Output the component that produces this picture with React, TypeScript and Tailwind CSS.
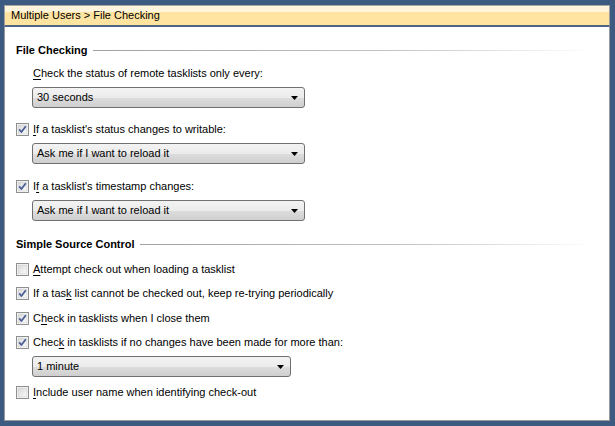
import React from "react";

const font = { fontFamily: '"Liberation Sans", Arial, sans-serif' };

function CheckBox({ checked }: { checked: boolean }) {
  return (
    <svg width="13" height="13" viewBox="0 0 13 13" className="shrink-0">
      <defs>
        <linearGradient id="cbg" x1="0" y1="0" x2="1" y2="1">
          <stop offset="0" stopColor="#d8d8d8" />
          <stop offset="1" stopColor="#fbfbfb" />
        </linearGradient>
      </defs>
      <rect x="0.5" y="0.5" width="12" height="12" fill="#fff" stroke="#8e8f8f" />
      <rect x="2" y="2" width="9" height="9" fill="url(#cbg)" stroke="#c8c8c8" strokeWidth="0.6" />
      {checked && (
        <path d="M3.2 6.4 L5.4 9 L9.8 3.2" fill="none" stroke="#4a5f97" strokeWidth="1.8" strokeLinejoin="round" />
      )}
    </svg>
  );
}

function Check({ checked, pre, k, post, className }: { checked: boolean; pre: string; k: string; post: string; className?: string }) {
  return (
    <div className={"flex h-[16px] items-center gap-[4px] pl-[11px] " + (className ?? "")}>
      <CheckBox checked={checked} />
      <span className="text-[11px] leading-none text-black">
        {pre}
        <span className="underline underline-offset-2">{k}</span>
        {post}
      </span>
    </div>
  );
}

function Select({ value, width, className }: { value: string; width: string; className?: string }) {
  return (
    <div
      className={
        "ml-[27px] flex h-[21px] items-center justify-between rounded-[3px] border border-[#707070] bg-[linear-gradient(#f3f3f3,#ebebeb_50%,#dddddd_51%,#cfcfcf)] pl-[4px] pr-[6px] " +
        width +
        " " +
        (className ?? "")
      }
    >
      <span className="text-[11px] leading-none text-black">{value}</span>
      <svg width="7" height="4" viewBox="0 0 7 4">
        <path d="M0 0 H7 L3.5 4 Z" fill="#000" />
      </svg>
    </div>
  );
}

function Heading({ title, className }: { title: string; className?: string }) {
  return (
    <div className={"flex h-[16px] items-center pl-[11px] pr-[15px] " + (className ?? "")}>
      <span className="text-[11px] font-bold leading-none text-black">{title}</span>
      <div className="ml-[5px] h-px flex-1 bg-[linear-gradient(to_right,#a0a0a0,#c4c4c4_60%,#ffffff)]" />
    </div>
  );
}

export default function App() {
  return (
    <div className="flex h-[426px] w-[615px] flex-col bg-[#3d5a80] pb-[5px] pl-[4px] pr-[5px] pt-[5px]" style={font}>
      <div className="flex h-[22px] items-center border-x border-t border-b-2 border-x-[#a0a0a0] border-t-[#a6a6a6] border-b-[#4c6585] bg-[linear-gradient(#fff4dc_0,#fff4dc_33%,#ffe4a1_34%,#ffe4a1)] pl-[6px]">
        <span className="text-[11px] leading-none text-black">Multiple Users &gt; File Checking</span>
      </div>
      <div className="flex flex-1 flex-col border-x border-b border-[#9a9a9a] bg-white">
        <Heading title="File Checking" className="mt-[15px]" />
        <div className="mt-[7px] flex h-[16px] items-center pl-[28px]">
          <span className="text-[11px] leading-none text-black">
            <span className="underline underline-offset-2">C</span>heck the status of remote tasklists only every:
          </span>
        </div>
        <Select value="30 seconds" width="w-[273px]" className="mt-[6px]" />
        <Check checked pre="" k="I" post="f a tasklist's status changes to writable:" className="mt-[13px]" />
        <Select value="Ask me if I want to reload it" width="w-[273px]" className="mt-[6px]" />
        <Check checked pre="I" k="f" post=" a tasklist's timestamp changes:" className="mt-[14px]" />
        <Select value="Ask me if I want to reload it" width="w-[273px]" className="mt-[6px]" />
        <Heading title="Simple Source Control" className="mt-[15px]" />
        <Check checked={false} pre="" k="A" post="ttempt check out when loading a tasklist" className="mt-[9px]" />
        <Check checked pre="If a tas" k="k" post=" list cannot be checked out, keep re-trying periodically" className="mt-[8px]" />
        <Check checked pre="C" k="h" post="eck in tasklists when I close them" className="mt-[9px]" />
        <Check checked pre="Chec" k="k" post=" in tasklists if no changes have been made for more than:" className="mt-[8px]" />
        <Select value="1 minute" width="w-[259px]" className="mt-[6px]" />
        <Check checked={false} pre="" k="I" post="nclude user name when identifying check-out" className="mt-[7px]" />
      </div>
    </div>
  );
}
